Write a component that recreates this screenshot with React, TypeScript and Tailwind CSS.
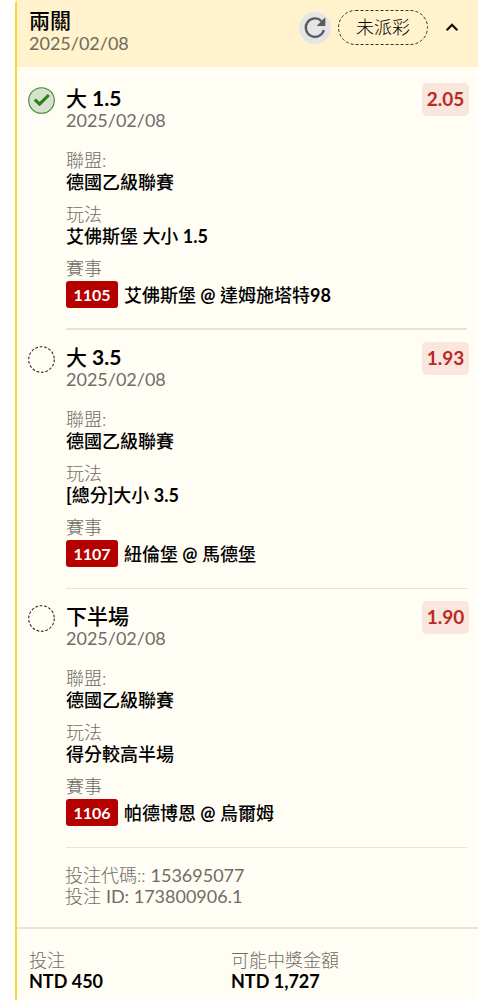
import React from "react";

type Leg = {
  title: string;
  date: string;
  odds: string;
  won: boolean;
  league: string;
  market: string;
  code: string;
  match: string;
};

const legs: Leg[] = [
  {
    title: "大 1.5",
    date: "2025/02/08",
    odds: "2.05",
    won: true,
    league: "德國乙級聯賽",
    market: "艾佛斯堡 大小 1.5",
    code: "1105",
    match: "艾佛斯堡 @ 達姆施塔特98",
  },
  {
    title: "大 3.5",
    date: "2025/02/08",
    odds: "1.93",
    won: false,
    league: "德國乙級聯賽",
    market: "[總分]大小 3.5",
    code: "1107",
    match: "紐倫堡 @ 馬德堡",
  },
  {
    title: "下半場",
    date: "2025/02/08",
    odds: "1.90",
    won: false,
    league: "德國乙級聯賽",
    market: "得分較高半場",
    code: "1106",
    match: "帕德博恩 @ 烏爾姆",
  },
];

// Chinese runs keep the medium weight; Latin letters, digits and spaces are set bold.
function Mixed({ text }: { text: string }) {
  return (
    <span className="font-medium">
      {text.split(/([ -~]+)/).map((part, i) =>
        i % 2 ? (
          <span key={i} className="font-bold">
            {part}
          </span>
        ) : (
          part
        ),
      )}
    </span>
  );
}

function StatusMark({ won }: { won: boolean }) {
  return (
    <svg viewBox="0 0 27 27" className="mt-4 size-[27px] shrink-0" fill="none" aria-hidden="true">
      {won ? (
        <>
          <circle cx="13.5" cy="13.5" r="12.8" fill="#d5e2cc" stroke="#43863a" strokeWidth="1.1" />
          <path d="M6.8 12.6L11.6 17.2L20.8 8" stroke="#2f7a1f" strokeWidth="3.1" />
        </>
      ) : (
        <circle cx="13.5" cy="13.5" r="12.8" stroke="#222" strokeWidth="1.1" strokeDasharray="2.7 1.77" />
      )}
    </svg>
  );
}

function LegItem({ leg, first }: { leg: Leg; first: boolean }) {
  return (
    <li className="flex pl-[11px] pr-[9px]">
      <StatusMark won={leg.won} />
      <div className={`ml-[11px] mr-[2px] min-w-0 grow pt-[15px] border-[#e6e2dc] ${first ? "border-b-2 pb-5" : "border-b pb-[21px]"}`}>
        <div className="flex justify-between">
          <div>
            <h3 className="text-[21px] leading-6 text-black">
              <Mixed text={leg.title} />
            </h3>
            <p className="leading-[21px] text-[#6e6d69]">{leg.date}</p>
          </div>
          <span className="-mt-[3px] -mr-[2px] flex h-[33px] w-[47px] items-center justify-center rounded-[5px] bg-[#f8e6df] text-[19px] font-bold text-[#bb2a22]">
            {leg.odds}
          </span>
        </div>
        <dl className="mt-[18px] leading-[22px] text-black">
          <dt className="font-light text-[#6e6d69]">聯盟:</dt>
          <dd>
            <Mixed text={leg.league} />
          </dd>
          <dt className="mt-[10px] font-light text-[#6e6d69]">玩法</dt>
          <dd>
            <Mixed text={leg.market} />
          </dd>
          <dt className="mt-[10px] font-light text-[#6e6d69]">賽事</dt>
          <dd className="mt-[2px] flex items-center">
            <span className="mr-[6px] flex h-[27px] w-[52px] items-center justify-center rounded-[3px] bg-[#b50000] text-[16px] font-bold text-white">
              {leg.code}
            </span>
            <Mixed text={leg.match} />
          </dd>
        </dl>
      </div>
    </li>
  );
}

export default function App() {
  return (
    <main className="min-h-screen bg-white pl-[15px] font-['Lato','Noto_Sans_CJK_TC',sans-serif] text-[18px]">
      <article className="min-h-screen rounded-tl-sm border-l-2 border-[#fdd835] bg-[#fffdf4]">
        <header className="flex justify-between bg-[#fff2cd] pt-2 pr-[14px] pb-[13px] pl-3">
          <div>
            <h2 className="text-[21px] leading-6 font-medium text-black">兩關</h2>
            <p className="leading-[22px] text-[#6e6a5c]">2025/02/08</p>
          </div>
          <div className="mt-[2px] flex h-[35px] items-center">
            <button type="button" aria-label="重新整理" className="mr-[7px] flex size-8 items-center justify-center rounded-full bg-[#e4e5e7]">
              <svg viewBox="0 0 24 24" className="size-6" fill="none" aria-hidden="true">
                <path d="M18.6 5.2A9.2 9.2 0 1 0 20.9 14" stroke="#595959" strokeWidth="2.3" />
                <path d="M22.3 1.3V10H13.6Z" fill="#595959" />
              </svg>
            </button>
            <span className="relative flex h-[35px] w-[90px] items-center justify-center font-light text-black">
              <svg viewBox="0 0 90 35" className="absolute inset-0 size-full" fill="none" aria-hidden="true">
                <rect x="0.5" y="0.5" width="89" height="34" rx="17" stroke="#333" strokeDasharray="3 2" />
              </svg>
              未派彩
            </span>
            <button type="button" aria-label="收合" className="ml-3 flex size-6 items-center justify-center">
              <svg viewBox="0 0 24 24" className="size-6" fill="none" aria-hidden="true">
                <path d="M6.7 14.2L12 8.8L17.3 14.2" stroke="#111" strokeWidth="2.3" />
              </svg>
            </button>
          </div>
        </header>

        <ul className="pt-1">
          {legs.map((leg, i) => (
            <LegItem key={leg.code} leg={leg} first={i === 0} />
          ))}
        </ul>

        <div className="pt-[17px] pb-5 pl-12 leading-[21px] text-[#6e6d69]">
          <p className="font-light">
            投注代碼:: <span className="font-normal">153695077</span>
          </p>
          <p className="font-light">
            投注 <span className="font-normal">ID: 173800906.1</span>
          </p>
        </div>

        <footer className="border-t-2 border-[#e6e2dc] pt-[21px] pl-3">
          <dl className="grid grid-cols-[202px_1fr] leading-[21px]">
            <div>
              <dt className="font-light text-[#6e6d69]">投注</dt>
              <dd className="font-bold text-black">NTD 450</dd>
            </div>
            <div>
              <dt className="font-light text-[#6e6d69]">可能中獎金額</dt>
              <dd className="font-bold text-black">NTD 1,727</dd>
            </div>
          </dl>
        </footer>
      </article>
    </main>
  );
}
